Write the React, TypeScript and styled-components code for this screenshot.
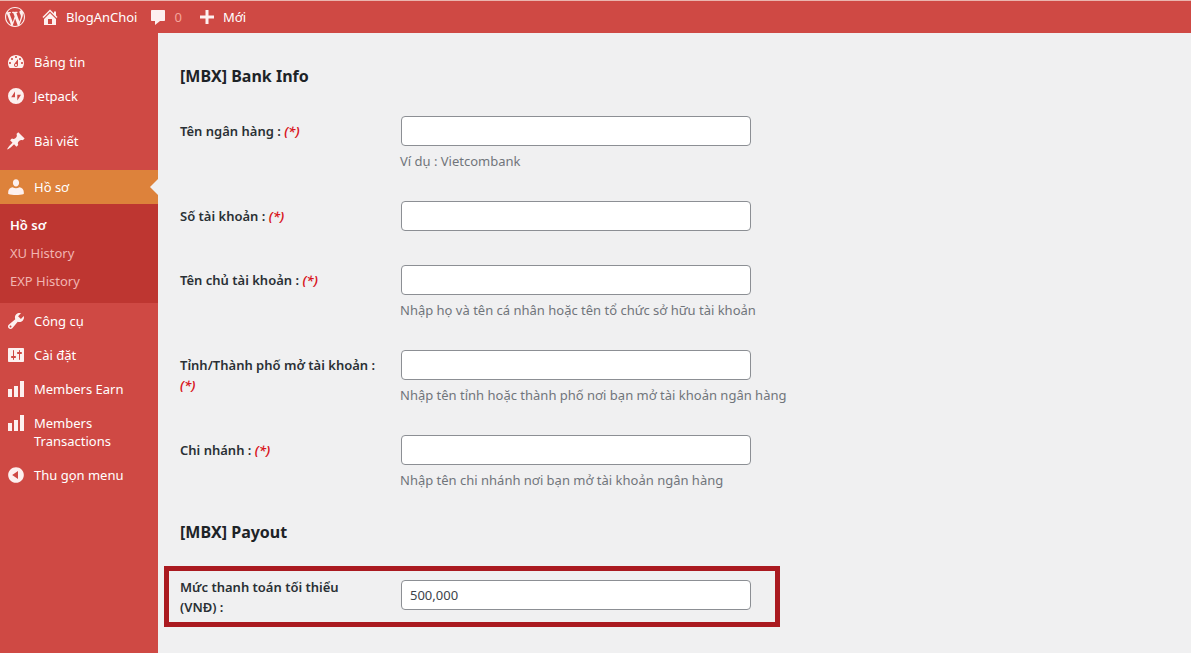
import React from 'react';
import styled, { createGlobalStyle } from 'styled-components';

const GlobalStyle = createGlobalStyle`
  * { box-sizing: border-box; }
  body {
    margin: 0;
    background: #fff;
    color: #1d2327;
    font-family: "Noto Sans", "Open Sans", sans-serif;
    font-size: 13px;
    line-height: 20px;
  }
`;

const icons = {
  wordpress:
    'M20 10c0-5.51-4.49-10-10-10C4.48 0 0 4.49 0 10c0 5.52 4.48 10 10 10 5.51 0 10-4.48 10-10zM7.78 15.37L4.37 6.22c.55-.02 1.17-.08 1.17-.08.5-.06.44-1.13-.06-1.11 0 0-1.45.11-2.37.11-.18 0-.37 0-.58-.01C4.12 2.69 6.87 1.11 10 1.11c2.33 0 4.45.87 6.05 2.34-.68-.11-1.65.39-1.65 1.58 0 .74.45 1.36.9 2.1.35.61.55 1.36.55 2.46 0 1.49-1.4 5-1.4 5l-3.03-8.37c.54-.02.82-.17.82-.17.5-.05.44-1.25-.06-1.22 0 0-1.44.12-2.38.12-.87 0-2.33-.12-2.33-.12-.5-.03-.56 1.2-.06 1.22l.92.08 1.26 3.41zM17.41 10c.24-.64.74-1.87.43-4.25.7 1.29 1.05 2.71 1.05 4.25 0 3.29-1.73 6.24-4.4 7.78.97-2.59 1.94-5.2 2.92-7.78zM6.1 18.09C3.12 16.65 1.11 13.53 1.11 10c0-1.3.23-2.48.72-3.59C3.25 10.3 4.67 14.2 6.1 18.09zm4.03-6.63l2.58 6.98c-.86.29-1.76.45-2.71.45-.79 0-1.57-.11-2.29-.33.81-2.38 1.62-4.74 2.42-7.1z',
  home: 'M16 8.5l1.53 1.53-1.06 1.06L10 4.6l-6.47 6.49-1.06-1.06L10 2.5l4 4v-2h2v4zm-6-2.46l6 5.99V18H4v-5.97zM12 17v-5H8v5h4z',
  comments: 'M4 3h12c.6 0 1 .4 1 1v9c0 .6-.4 1-1 1h-4l-5 4v-4H4c-.6 0-1-.4-1-1V4c0-.6.4-1 1-1z',
  plus: 'M17 8.5v3h-5.500v5.500h-3v-5.500H3v-3h5.500V3h3v5.500z',
  dashboard:
    'M3.76 16h12.48c1.1-1.37 1.76-3.11 1.76-5 0-4.42-3.58-8-8-8s-8 3.58-8 8c0 1.89.66 3.63 1.76 5zM10 4c.55 0 1 .45 1 1s-.45 1-1 1-1-.45-1-1 .45-1 1-1zM6 6c.55 0 1 .45 1 1s-.45 1-1 1-1-.45-1-1 .45-1 1-1zm8 0c.55 0 1 .45 1 1s-.45 1-1 1-1-.45-1-1 .45-1 1-1zm-5.370 5.550L12 7v6c0 1.1-.9 2-2 2s-2-.9-2-2c0-.57.24-1.080.63-1.450zM4 10c.55 0 1 .45 1 1s-.45 1-1 1-1-.45-1-1 .45-1 1-1zm12 0c.55 0 1 .45 1 1s-.45 1-1 1-1-.45-1-1 .45-1 1-1zm-5 3c0-.55-.45-1-1-1s-1 .45-1 1 .45 1 1 1 1-.45 1-1z',
  jetpack: 'M10 2a8 8 0 1 0 0 16a8 8 0 0 0 0-16zM9 5.500v5.800H5.200zM11.300 14.500V8.700H15z',
  post: 'M10.44 3.02l1.82-1.82 6.36 6.35-1.83 1.82c-1.05-.68-2.48-.57-3.41.36l-.75.75c-.92.93-1.04 2.35-.35 3.41l-1.83 1.82-2.41-2.41-2.8 2.79c-.42.42-3.38 2.71-3.8 2.29s1.86-3.39 2.28-3.81l2.79-2.79L4.1 9.36l1.83-1.82c1.05.69 2.48.57 3.4-.36l.75-.75c.93-.92 1.05-2.35.36-3.41z',
  users:
    'M10 9.500c-2 0-3.100-1.700-3.100-3.700C6.900 3.700 8 2.200 10 2.200s3.100 1.500 3.100 3.600c0 2-1.100 3.700-3.100 3.700zM6.600 10.300c1.100.7 2.200 1 3.400 1s2.300-.3 3.400-1c2.500.3 4.400 2.400 4.400 4.700v2c-2.300.8-5 1.100-7.800 1.100s-5.500-.3-7.800-1.100v-2c0-2.300 1.900-4.400 4.400-4.700z',
  tools:
    'M16.68 9.77c-1.34 1.34-3.3 1.67-4.95.99l-5.41 6.52c-.99.99-2.59.99-3.58 0s-.99-2.59 0-3.57l6.52-5.42c-.68-1.65-.35-3.61.99-4.95 1.28-1.28 3.12-1.62 4.72-1.06l-2.89 2.89 2.82 2.82 2.86-2.87c.53 1.58.18 3.39-1.08 4.65zM3.81 16.21c.4.39 1.04.39 1.43 0 .4-.4.4-1.04 0-1.43-.39-.4-1.03-.4-1.43 0-.39.39-.39 1.03 0 1.43z',
  settings:
    'M18 16V4c0-.55-.45-1-1-1H3c-.55 0-1 .45-1 1v12c0 .55.45 1 1 1h14c.55 0 1-.45 1-1zM8 11h1c.55 0 1 .45 1 1s-.45 1-1 1H8v1.5c0 .28-.22.5-.5.5s-.5-.22-.5-.5V13H6c-.55 0-1-.45-1-1s.45-1 1-1h1V5.5c0-.28.22-.5.5-.5s.5.22.5.5V11zm5-2h-1c-.55 0-1-.45-1-1s.45-1 1-1h1V5.5c0-.28.22-.5.5-.5s.5.22.5.5V7h1c.55 0 1 .45 1 1s-.45 1-1 1h-1v5.5c0 .28-.22.5-.5.5s-.5-.22-.5-.5V9z',
  chart: 'M18 18V2h-4v16h4zm-6 0V7H8v11h4zm-6 0v-8H2v8h4z',
  collapse: 'M10 2.16c4.33 0 7.84 3.51 7.84 7.84s-3.51 7.84-7.84 7.84S2.16 14.33 2.16 10 5.71 2.16 10 2.16zm2 11.72V6.12L6.18 9.97z',
};

type IconName = keyof typeof icons;

const Svg = styled.svg`
  flex: none;
  display: block;
  fill: #fdf0ef;
`;

function Icon({ name }: { name: IconName }) {
  return (
    <Svg width="20" height="20" viewBox="0 0 20 20" aria-hidden="true">
      <path fillRule="evenodd" d={icons[name]} />
    </Svg>
  );
}

const TopBar = styled.header`
  display: flex;
  align-items: center;
  gap: 11px;
  height: 33px;
  padding-left: 5px;
  background: #cf4944;
  border-top: 1px solid #eab5ae;
`;

const BarLink = styled.a<{ $wide?: boolean }>`
  display: flex;
  align-items: center;
  gap: 6px;
  padding-right: ${(p) => (p.$wide ? '4px' : '0')};
  color: #fff;
  text-decoration: none;
`;

const Count = styled.span`
  color: #f5a59a;
`;

const Columns = styled.div`
  display: flex;
  align-items: stretch;
`;

const Sidebar = styled.nav`
  flex: none;
  width: 158px;
  padding-top: 12px;
  background: #cf4944;
`;

const MenuList = styled.ul`
  list-style: none;
  margin: 0;
  padding: 0;
`;

const MenuItem = styled.li<{ $after?: number }>`
  margin-bottom: ${(p) => p.$after ?? 0}px;
`;

const MenuLink = styled.a<{ $active?: boolean }>`
  position: relative;
  display: flex;
  align-items: flex-start;
  gap: 8px;
  padding: 8px 6px;
  background: ${(p) => (p.$active ? '#dd823b' : 'transparent')};
  color: #fff;
  line-height: 18px;
  text-decoration: none;

  &::after {
    content: ${(p) => (p.$active ? '""' : 'none')};
    position: absolute;
    right: 0;
    top: 9px;
    border: 8px solid transparent;
    border-left-width: 0;
    border-right-color: #f0f0f1;
  }
`;

const CollapseButton = styled.button`
  display: flex;
  align-items: flex-start;
  gap: 8px;
  width: 100%;
  padding: 8px 6px;
  border: 0;
  background: transparent;
  color: #fff;
  font: inherit;
  line-height: 18px;
  text-align: left;
`;

const IconSlot = styled.span`
  flex: none;
  height: 18px;
  display: flex;
  align-items: center;
`;

const SubMenu = styled.ul`
  list-style: none;
  margin: 0 0 1px;
  padding: 7px 0 8px;
  background: #be3631;
`;

const SubLink = styled.a<{ $current?: boolean }>`
  display: block;
  padding: 4px 10px;
  color: ${(p) => (p.$current ? '#fff' : '#f1b5b1')};
  font-weight: ${(p) => (p.$current ? 600 : 400)};
  text-decoration: none;
`;

const Main = styled.main`
  flex: 1;
  min-width: 0;
  padding: 31px 22px 16px;
  background: #f0f0f1;
`;

const SectionTitle = styled.h2<{ $later?: boolean }>`
  margin: ${(p) => (p.$later ? '15px' : '0')} 0 13px;
  font-size: 16px;
  line-height: 24px;
  font-weight: 700;
`;

const Row = styled.div`
  position: relative;
  display: grid;
  grid-template-columns: 200px minmax(0, 1fr);
  column-gap: 20px;
`;

const Label = styled.label`
  padding: 20px 0;
  font-weight: 600;
  color: #2a3035;
`;

const Required = styled.em`
  color: #d8141c;
`;

const Field = styled.div`
  align-self: center;
  padding: 15px 0 19px 1px;
`;

const TextInput = styled.input`
  display: block;
  width: 100%;
  max-width: 350px;
  height: 30px;
  padding: 0 8px;
  border: 1px solid #8c8f94;
  border-radius: 4px;
  background: #fff;
  color: #3c434a;
  font: inherit;
`;

const Hint = styled.p`
  margin: 5px 0 -4px -1px;
  color: #70757b;
`;

const Highlight = styled.div`
  position: absolute;
  left: -16px;
  top: 9px;
  bottom: 10px;
  width: 616px;
  border: 5px solid #aa1a20;
  pointer-events: none;
`;

const menuTop: { icon: IconName; text: string; after?: number }[] = [
  { icon: 'dashboard', text: 'Bảng tin' },
  { icon: 'jetpack', text: 'Jetpack', after: 11 },
  { icon: 'post', text: 'Bài viết', after: 12 },
];

const menuBottom: { icon: IconName; text: string }[] = [
  { icon: 'tools', text: 'Công cụ' },
  { icon: 'settings', text: 'Cài đặt' },
  { icon: 'chart', text: 'Members Earn' },
  { icon: 'chart', text: 'Members Transactions' },
];

const bankFields = [
  { id: 'bank', label: 'Tên ngân hàng :', hint: 'Ví dụ : Vietcombank' },
  { id: 'account', label: 'Số tài khoản :' },
  { id: 'owner', label: 'Tên chủ tài khoản :', hint: 'Nhập họ và tên cá nhân hoặc tên tổ chức sở hữu tài khoản' },
  { id: 'city', label: 'Tỉnh/Thành phố mở tài khoản :', hint: 'Nhập tên tỉnh hoặc thành phố nơi bạn mở tài khoản ngân hàng' },
  { id: 'branch', label: 'Chi nhánh :', hint: 'Nhập tên chi nhánh nơi bạn mở tài khoản ngân hàng' },
];

export default function App() {
  return (
    <>
      <GlobalStyle />
      <TopBar>
        <BarLink href="#about" aria-label="WordPress" $wide><Icon name="wordpress" /></BarLink>
        <BarLink href="#site"><Icon name="home" />BlogAnChoi</BarLink>
        <BarLink href="#comments" $wide><Icon name="comments" /><Count>0</Count></BarLink>
        <BarLink href="#new"><Icon name="plus" />Mới</BarLink>
      </TopBar>
      <Columns>
        <Sidebar>
          <MenuList>
            {menuTop.map((m) => (
              <MenuItem key={m.text} $after={m.after}>
                <MenuLink href="#menu"><IconSlot><Icon name={m.icon} /></IconSlot>{m.text}</MenuLink>
              </MenuItem>
            ))}
            <MenuItem>
              <MenuLink href="#profile" $active><IconSlot><Icon name="users" /></IconSlot>Hồ sơ</MenuLink>
              <SubMenu>
                <li><SubLink href="#profile" $current>Hồ sơ</SubLink></li>
                <li><SubLink href="#xu">XU History</SubLink></li>
                <li><SubLink href="#exp">EXP History</SubLink></li>
              </SubMenu>
            </MenuItem>
            {menuBottom.map((m) => (
              <MenuItem key={m.text}>
                <MenuLink href="#menu"><IconSlot><Icon name={m.icon} /></IconSlot>{m.text}</MenuLink>
              </MenuItem>
            ))}
            <MenuItem>
              <CollapseButton type="button"><IconSlot><Icon name="collapse" /></IconSlot>Thu gọn menu</CollapseButton>
            </MenuItem>
          </MenuList>
        </Sidebar>
        <Main>
          <SectionTitle>[MBX] Bank Info</SectionTitle>
          {bankFields.map((f) => (
            <Row key={f.id}>
              <Label htmlFor={f.id}>{f.label} <Required>(*)</Required></Label>
              <Field>
                <TextInput id={f.id} type="text" />
                {f.hint && <Hint>{f.hint}</Hint>}
              </Field>
            </Row>
          ))}
          <SectionTitle $later>[MBX] Payout</SectionTitle>
          <Row>
            <Label htmlFor="minimum">Mức thanh toán tối thiểu (VNĐ)&nbsp;:</Label>
            <Field><TextInput id="minimum" type="text" defaultValue="500,000" /></Field>
            <Highlight />
          </Row>
        </Main>
      </Columns>
    </>
  );
}
